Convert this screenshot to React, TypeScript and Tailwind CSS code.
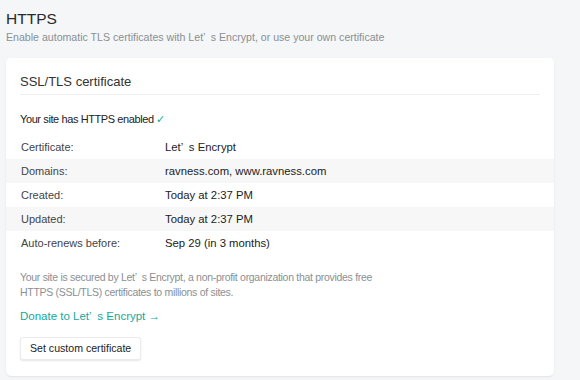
const rows = [
  { label: "Certificate:", value: "Let’\u2002s Encrypt" },
  { label: "Domains:", value: "ravness.com, www.ravness.com" },
  { label: "Created:", value: "Today at 2:37 PM" },
  { label: "Updated:", value: "Today at 2:37 PM" },
  { label: "Auto-renews before:", value: "Sep 29 (in 3 months)" },
];

const LE = "Let’\u2002s Encrypt";

export default function App() {
  return (
    <div className="min-h-[380px] w-[580px] bg-[#f4f6f7] px-[6px] pt-[8px] font-['Liberation_Sans',Arial,sans-serif] text-[#222]">
      <h1 className="text-[15.5px] leading-[22px] text-[#2a2a2a]">HTTPS</h1>
      <p className="text-[10.6px] leading-[14px] text-[#8a8f94]">
        Enable automatic TLS certificates with {LE}, or use your own certificate
      </p>

      <div className="mt-[14px] w-[548px] rounded-[5px] bg-white pb-[16px] shadow-[0_1px_2px_rgba(0,0,0,0.08)]">
        <div className="px-[14px]">
          <div className="border-b border-[#efefef] pt-[15px] pb-[3px] text-[13px] leading-[18px] text-[#333]">
            SSL/TLS certificate
          </div>
          <div className="mt-[17px] mb-[9px] text-[11px] leading-[14px] tracking-[-0.4px] text-[#222]">
            Your site has HTTPS enabled <span className="text-[#13a89e]">✓</span>
          </div>
        </div>

        <div className="text-[11px]">
          {rows.map((r, i) => (
            <div
              key={i}
              className={`flex h-[24px] items-center px-[15px] ${i % 2 === 1 ? "bg-[#f7f7f7]" : ""}`}
            >
              <div className="w-[144px] text-[#444]">{r.label}</div>
              <div className="text-[11.3px] text-[#222]">{r.value}</div>
            </div>
          ))}
        </div>

        <div className="px-[14px]">
          <p className="mt-[15px] text-[10.5px] leading-[15px] tracking-[-0.3px] text-[#8a8f94]">
            Your site is secured by {LE}, a non-profit organization that provides free
            <br />
            HTTPS (SSL/TLS) certificates to millions of sites.
          </p>
          <a className="mt-[8px] block text-[11.5px] leading-[16px] text-[#13a89e]">
            Donate to {LE} →
          </a>
          <button className="mt-[13px] h-[23px] rounded-[3px] border border-[#ececec] bg-white px-[9px] text-[10.6px] text-[#222] shadow-[0_1px_2px_rgba(0,0,0,0.1)]">
            Set custom certificate
          </button>
        </div>
      </div>
    </div>
  );
}
